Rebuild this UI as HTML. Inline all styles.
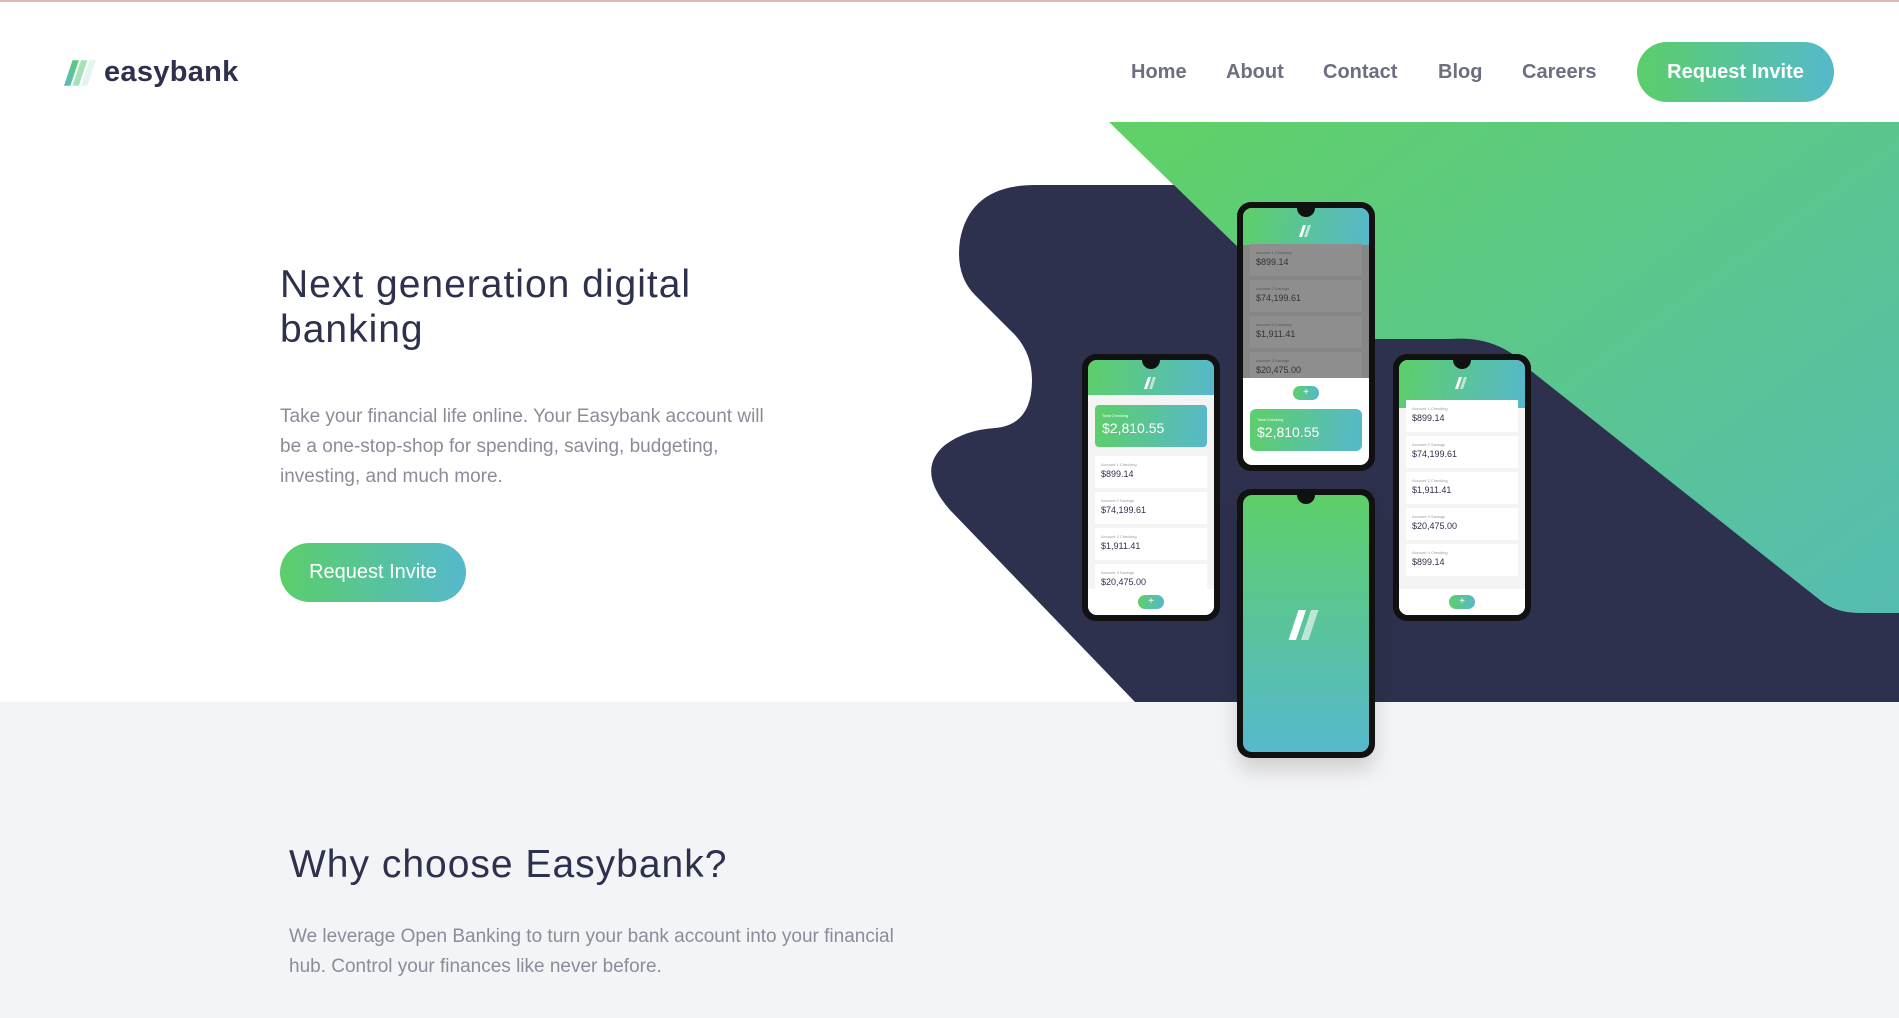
<!DOCTYPE html>
<html><head><meta charset="utf-8"><style>
*{box-sizing:border-box;margin:0;padding:0}
body{width:1899px;height:1018px;overflow:hidden;background:#fff;font-family:"Liberation Sans",sans-serif;position:relative}
.topline{position:absolute;left:0;top:0;width:1899px;height:2px;background:#e6b8b4}
.logo{position:absolute;left:64px;top:56px;display:flex;align-items:center}
.logo span{font-weight:bold;font-size:29px;color:#2d314d;margin-left:6px;letter-spacing:0.3px}
.nav{position:absolute;top:61px;font-size:20px;color:#6b6f80;font-weight:bold}
.btn{position:absolute;border-radius:30px;background:linear-gradient(90deg,#5ace6a,#55b9cb);color:#fff;font-size:20px;display:flex;align-items:center;justify-content:center}
.bg{position:absolute;left:0;top:702px;width:1899px;height:316px;background:#f3f4f6}
h1{position:absolute;left:280px;top:262px;font-size:39px;font-weight:normal;color:#2d314d;line-height:45px;letter-spacing:1px}
.p{position:absolute;color:#8a8d99;font-size:19px;line-height:30px}
h2{position:absolute;left:289px;top:843px;font-size:39px;font-weight:normal;color:#2d314d;letter-spacing:1px}
.phone{position:absolute;background:#111;border-radius:14px;padding:6px}
.scr{position:relative;width:100%;height:100%;border-radius:9px;overflow:hidden;background:#f4f4f4}
.hd{position:absolute;left:0;top:0;width:100%;background:linear-gradient(100deg,#5dcf68,#56b8cc)}
.notch{position:absolute;left:50%;top:0;width:18px;height:9px;margin-left:-9px;background:#111;border-radius:0 0 9px 9px}
.ic{position:absolute;left:50%;margin-left:-7px;width:14px;height:12px}
.it{position:absolute;left:7px;right:7px;height:32px;background:#fff;font-size:9px;color:#2d314d;padding:6px 6px}
.it small{display:block;font-size:4px;color:#999;margin-bottom:2px}
.card{position:absolute;background:linear-gradient(100deg,#5dcf68,#56b8cc);color:#fff;border-radius:4px;font-size:14px;padding:8px 7px}
.card small{display:block;font-size:4px;margin-bottom:2px}
.pill{position:absolute;left:50%;width:26px;height:14px;margin-left:-13px;background:linear-gradient(90deg,#5dcf68,#56b8cc);border-radius:7px;color:#fff;font-size:10px;text-align:center;line-height:14px}
</style></head><body>
<div class="topline"></div>
<div class="logo"><svg width="34" height="26" viewBox="0 0 32 24"><defs><linearGradient id="lg" x1="0" y1="1" x2="1" y2="0"><stop offset="0" stop-color="#55b9cb"/><stop offset="1" stop-color="#5ace6a"/></linearGradient></defs><polygon points="0,24 6,24 14,0 8,0" fill="url(#lg)"/><polygon points="8,24 14,24 22,0 16,0" fill="#a8e0b8"/><polygon points="16,24 22,24 30,0 24,0" fill="#e3f5ec"/></svg><span>easybank</span></div>
<div class="nav" style="left:1131px">Home</div>
<div class="nav" style="left:1226px">About</div>
<div class="nav" style="left:1323px">Contact</div>
<div class="nav" style="left:1438px">Blog</div>
<div class="nav" style="left:1522px">Careers</div>
<div class="btn" style="left:1637px;top:42px;width:197px;height:60px;font-weight:bold">Request Invite</div>
<div class="bg"></div>
<svg style="position:absolute;left:0;top:0" width="1899" height="1018">
<defs><linearGradient id="g" x1="0" y1="0" x2="1" y2="1"><stop offset="0" stop-color="#60d165"/><stop offset="1" stop-color="#55bbb8"/></linearGradient></defs>
<polygon points="1109,122 1899,122 1899,700 1500,700 1240,250" fill="url(#g)"/>
<path d="M1135,702 L950,510 Q915,470 945,445 Q965,430 995,428 Q1032,425 1032,380 Q1032,350 1010,330 L975,295 Q955,275 960,240 Q970,185 1035,185 L1174,185 L1245,254 L1260,339 L1450,339 Q1500,335 1530,370 L1820,600 Q1835,613 1860,613 L1899,613 L1899,702 Z" fill="#2d314d"/>
</svg>
<h1>Next generation digital<br>banking</h1>
<div class="p" style="left:280px;top:402px;width:510px">Take your financial life online. Your Easybank account will be a one-stop-shop for spending, saving, budgeting, investing, and much more.</div>
<div class="btn" style="left:280px;top:543px;width:186px;height:59px">Request Invite</div>
<h2>Why choose Easybank?</h2>
<div class="p" style="left:289px;top:922px;width:640px">We leverage Open Banking to turn your bank account into your financial hub. Control your finances like never before.</div>

<!-- left phone -->
<div class="phone" style="left:1082px;top:354px;width:138px;height:267px">
<div class="scr"><div class="hd" style="height:35px"></div><div class="notch"></div>
<svg class="ic" style="top:17px" viewBox="0 0 14 12"><polygon points="0,12 3,12 7,0 4,0" fill="#fff"/><polygon points="5,12 8,12 12,0 9,0" fill="#fff" opacity=".6"/></svg>
<div class="card" style="left:7px;top:45px;right:7px;height:42px"><small>Total Checking</small>$2,810.55</div>
<div class="it" style="top:96px"><small>Account 1 Checking</small>$899.14</div>
<div class="it" style="top:132px"><small>Account 2 Savings</small>$74,199.61</div>
<div class="it" style="top:168px"><small>Account 2 Checking</small>$1,911.41</div>
<div class="it" style="top:204px"><small>Account 3 Savings</small>$20,475.00</div>
<div style="position:absolute;left:0;right:0;bottom:0;height:26px;background:#fff"></div>
<div class="pill" style="bottom:6px">+</div></div></div>

<!-- right phone -->
<div class="phone" style="left:1393px;top:354px;width:138px;height:267px">
<div class="scr"><div class="hd" style="height:48px"></div><div class="notch"></div>
<svg class="ic" style="top:17px" viewBox="0 0 14 12"><polygon points="0,12 3,12 7,0 4,0" fill="#fff"/><polygon points="5,12 8,12 12,0 9,0" fill="#fff" opacity=".6"/></svg>
<div class="it" style="top:40px"><small>Account 1 Checking</small>$899.14</div>
<div class="it" style="top:76px"><small>Account 2 Savings</small>$74,199.61</div>
<div class="it" style="top:112px"><small>Account 2 Checking</small>$1,911.41</div>
<div class="it" style="top:148px"><small>Account 3 Savings</small>$20,475.00</div>
<div class="it" style="top:184px"><small>Account 4 Checking</small>$899.14</div>
<div style="position:absolute;left:0;right:0;bottom:0;height:26px;background:#fff"></div>
<div class="pill" style="bottom:6px">+</div></div></div>

<!-- top center phone -->
<div class="phone" style="left:1237px;top:202px;width:138px;height:269px">
<div class="scr" style="background:#fff"><div class="hd" style="height:37px"></div><div class="notch"></div>
<svg class="ic" style="top:17px" viewBox="0 0 14 12"><polygon points="0,12 3,12 7,0 4,0" fill="#fff"/><polygon points="5,12 8,12 12,0 9,0" fill="#fff" opacity=".6"/></svg>
<div style="position:absolute;left:0;right:0;top:37px;height:133px;background:#868686"></div>
<div class="it" style="top:36px;background:#8e8e8e;color:#333"><small style="color:#555">Account 1 Checking</small>$899.14</div>
<div class="it" style="top:72px;background:#8e8e8e;color:#333"><small style="color:#555">Account 2 Savings</small>$74,199.61</div>
<div class="it" style="top:108px;background:#8e8e8e;color:#333"><small style="color:#555">Account 2 Checking</small>$1,911.41</div>
<div class="it" style="top:144px;background:#8e8e8e;color:#333;height:26px"><small style="color:#555">Account 3 Savings</small>$20,475.00</div>
<div class="pill" style="top:178px">+</div>
<div class="card" style="left:7px;right:7px;top:201px;height:42px;border-radius:6px"><small>Total Checking</small>$2,810.55</div>
</div></div>

<!-- bottom center phone -->
<div class="phone" style="left:1237px;top:489px;width:138px;height:269px;box-shadow:0 12px 20px rgba(0,0,0,.15)">
<div class="scr" style="background:linear-gradient(180deg,#5dcf68,#56b9cc)"><div class="notch"></div>
<svg style="position:absolute;left:50%;top:115px;margin-left:-20px" width="40" height="30" viewBox="0 0 14 12"><polygon points="0,12 3,12 7,0 4,0" fill="#fff"/><polygon points="5,12 8,12 12,0 9,0" fill="#fff" opacity=".6"/></svg>
</div></div>
</body></html>
